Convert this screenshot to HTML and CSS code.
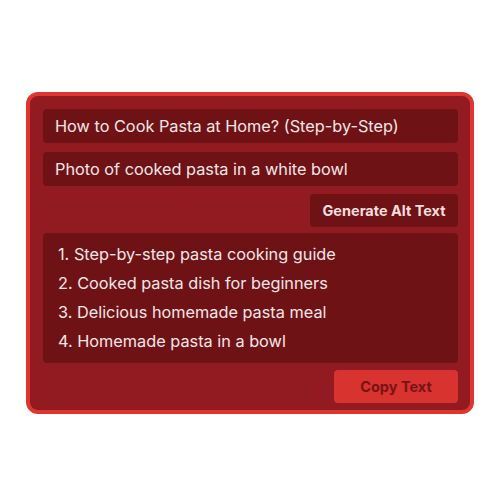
FILE: index.html
```html
<!DOCTYPE html>
<html>
<head>
<meta charset="utf-8">
<link rel="stylesheet" href="styles.css">
</head>
<body>
<div class="card">
  <div class="field">How to Cook Pasta at Home? (Step-by-Step)</div>
  <div class="field">Photo of cooked pasta in a white bowl</div>
  <div class="row"><button class="btn gen">Generate Alt Text</button></div>
  <ol class="list">
    <li>1. Step-by-step pasta cooking guide</li>
    <li>2. Cooked pasta dish for beginners</li>
    <li>3. Delicious homemade pasta meal</li>
    <li>4. Homemade pasta in a bowl</li>
  </ol>
  <div class="row"><button class="btn copy">Copy Text</button></div>
</div>
</body>
</html>
```
FILE: styles.css
```css
html, body { margin: 0; padding: 0; background: #ffffff; }
body {
  width: 500px; height: 500px;
  font-family: Inter, "Noto Sans", sans-serif;
  padding-top: 92px;
  box-sizing: border-box;
}
.card {
  width: 448px;
  margin: 0 auto;
  box-sizing: border-box;
  background: #911b20;
  border: 4px solid #e0352f;
  border-radius: 12px;
  padding: 13px 12px 7px 13px;
  display: flex;
  flex-direction: column;
}
.field {
  background: #6f1216;
  border-radius: 4px;
  height: 34px;
  display: flex;
  align-items: center;
  padding: 0 12px;
  color: #f5e6e6;
  font-size: 16.3px;
  margin-bottom: 9px;
}
.field + .field { margin-bottom: 8px; }
.row { display: flex; justify-content: flex-end; }
.btn {
  border: none;
  border-radius: 4px;
  font-family: Inter, "Noto Sans", sans-serif;
  font-weight: 700;
  font-size: 14.5px;
  height: 33px;
  padding: 0;
}
.gen { width: 148px; background: #6f1216; color: #f5dede; }
.copy { width: 124px; background: #d8332f; color: #7a1215; }
.list {
  list-style: none;
  margin: 6px 0 7px 0;
  padding: 7px 15px;
  background: #6f1216;
  border-radius: 4px;
  color: #f5e6e6;
  font-size: 16.3px;
}
.list li { line-height: 29px; height: 29px; }
```
